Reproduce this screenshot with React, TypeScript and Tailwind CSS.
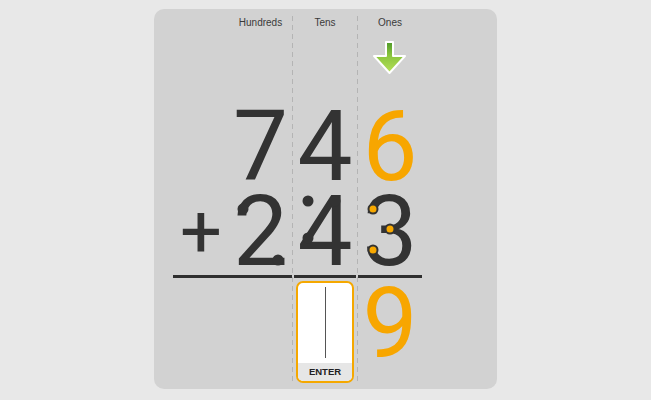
import React from "react";

const digitFont = { fontFamily: "Roboto, 'Noto Sans', sans-serif" };

function Dot({ x, y, orange = false }: { x: number; y: number; orange?: boolean }) {
  return (
    <span
      className={
        orange
          ? "absolute w-[11px] h-[11px] rounded-full bg-[#f7a800] border-2 border-[#333333] -translate-x-1/2 -translate-y-1/2"
          : "absolute w-[11px] h-[11px] rounded-full bg-[#333333] -translate-x-1/2 -translate-y-1/2"
      }
      style={{ left: x, top: y }}
    />
  );
}

function Sep() {
  return (
    <div className="w-px self-stretch bg-[repeating-linear-gradient(to_bottom,#b4b4b4_0px,#b4b4b4_5px,transparent_5px,transparent_9px)]" />
  );
}

function Arrow() {
  return (
    <svg width="36" height="36" viewBox="0 0 36 36" className="block mx-auto">
      <defs>
        <linearGradient id="ag" x1="0" y1="0" x2="0" y2="1">
          <stop offset="0" stopColor="#4f9a2a" />
          <stop offset="0.45" stopColor="#8cc63e" />
          <stop offset="1" stopColor="#b6e05a" />
        </linearGradient>
      </defs>
      <polygon
        points="14,2 21,2 21,16 33,16 17.5,33 2,16 14,16"
        fill="url(#ag)"
        stroke="#ffffff"
        strokeWidth="2"
        strokeLinejoin="round"
      />
    </svg>
  );
}

export default function App() {
  const digit = "text-[98px] leading-[85px] font-normal text-center h-[85px]";
  return (
    <div className="w-[651px] h-[400px] bg-[#e8e8e8] pt-[9px]" style={{ fontFamily: "'Liberation Sans', Arial, sans-serif" }}>
      <div className="mx-auto w-[343px] h-[380px] rounded-[10px] bg-[#d2d2d2] pt-[7px] pb-[6px] flex">
        {/* operator column */}
        <div className="w-[75px] flex flex-col">
          <div className="h-[14px]" />
          <div className="h-[74px]" />
          <div className="h-[85px]" />
          <div className="h-[85px] flex justify-end pr-[7px] text-[74px] leading-[85px] text-[#333333]" style={digitFont}>
            +
          </div>
          <div className="h-[7px] pt-[1px] pl-[19px]">
            <div className="h-[3px] bg-[#2f2f2f]" />
          </div>
          <div className="h-[102px]" />
        </div>
        {/* hundreds */}
        <div className="w-[63px] flex flex-col">
          <div className="h-[14px] text-[10px] leading-[14px] text-[#3a3a3a] text-center">Hundreds</div>
          <div className="h-[74px]" />
          <div className={`${digit} text-[#333333]`} style={digitFont}>7</div>
          <div className={`${digit} text-[#333333] relative`} style={digitFont}>
            2
            <Dot x={14} y={20} />
            <Dot x={49} y={71} />
          </div>
          <div className="h-[7px] pt-[1px]">
            <div className="h-[3px] bg-[#2f2f2f]" />
          </div>
          <div className="h-[102px]" />
        </div>
        <Sep />
        {/* tens */}
        <div className="w-[64px] flex flex-col">
          <div className="h-[14px] text-[10px] leading-[14px] text-[#3a3a3a] text-center">Tens</div>
          <div className="h-[74px]" />
          <div className={`${digit} text-[#333333]`} style={digitFont}>4</div>
          <div className={`${digit} text-[#333333] relative`} style={digitFont}>
            4
            <Dot x={15} y={12} />
            <Dot x={42} y={12} />
            <Dot x={15} y={49} />
          </div>
          <div className="h-[7px] pt-[1px] px-px">
            <div className="h-[3px] bg-[#2f2f2f]" />
          </div>
          <div className="h-[102px] px-[3px]">
            <div className="h-full rounded-[7px] border-2 border-[#f5a800] bg-white overflow-hidden flex flex-col">
              <div className="flex-1 flex justify-center pt-[4px]">
                <div className="w-px h-[71px] bg-[#555555]" />
              </div>
              <div className="h-[18px] bg-[#e6e6e6] text-[9.5px] leading-[18px] font-bold text-center text-[#222222]">
                ENTER
              </div>
            </div>
          </div>
        </div>
        <Sep />
        {/* ones */}
        <div className="w-[64px] flex flex-col">
          <div className="h-[14px] text-[10px] leading-[14px] text-[#3a3a3a] text-center">Ones</div>
          <div className="h-[74px] pt-[10px]">
            <Arrow />
          </div>
          <div className={`${digit} text-[#f7a600]`} style={digitFont}>6</div>
          <div className={`${digit} text-[#333333] relative`} style={digitFont}>
            3
            <Dot x={15} y={20} orange />
            <Dot x={32} y={40} orange />
            <Dot x={15} y={61} orange />
          </div>
          <div className="h-[7px] pt-[1px]">
            <div className="h-[3px] bg-[#2f2f2f]" />
          </div>
          <div className={`${digit} text-[#f7a600]`} style={digitFont}>9</div>
        </div>
        <div className="flex-1" />
      </div>
    </div>
  );
}
